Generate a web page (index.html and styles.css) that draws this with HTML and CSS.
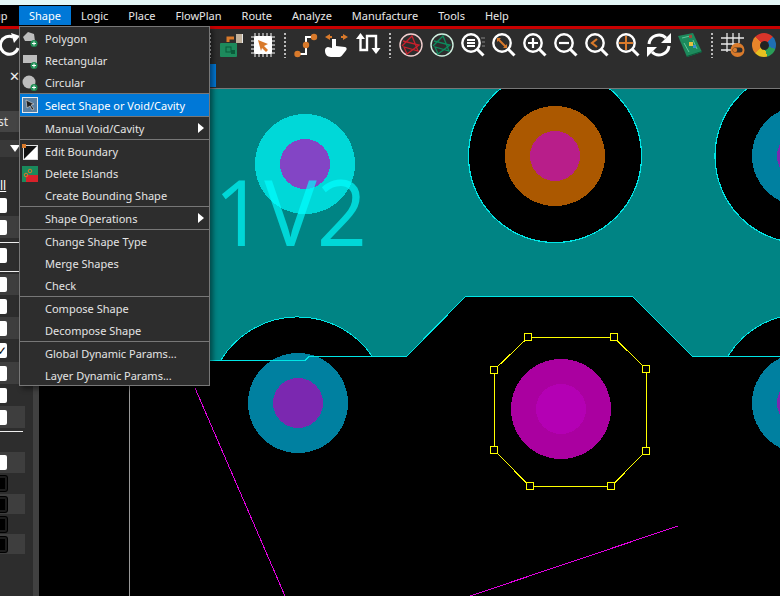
FILE: index.html
```html
<!DOCTYPE html>
<html lang="en">
<head>
<meta charset="utf-8">
<title>Shape menu</title>
<link rel="stylesheet" href="styles.css">
</head>
<body>
<div class="app">
  <div class="titlestrip"></div>
  <nav class="menubar">
    <span class="mi mi-first">up</span>
    <span class="mi mi-active">Shape</span>
    <span class="mi">Logic</span>
    <span class="mi">Place</span>
    <span class="mi">FlowPlan</span>
    <span class="mi">Route</span>
    <span class="mi">Analyze</span>
    <span class="mi">Manufacture</span>
    <span class="mi">Tools</span>
    <span class="mi">Help</span>
  </nav>
  <div class="redline"></div>
  <div class="toolbar">
    <svg class="ico ico-first" viewBox="0 0 24 24"><path d="M20 15A9 9 0 1 1 15 4" fill="none" stroke="#fff" stroke-width="3"/><path d="M13 0l9 3-6 7z" fill="#fff"/></svg>
    <span class="tool-spacer"></span>
    <span class="sep-dots sep-first"></span>
    <svg class="ico" viewBox="0 0 24 24"><rect x="0" y="10" width="17" height="14" rx="1" fill="#1d8a5c"/><rect x="6" y="14" width="5" height="5" fill="none" stroke="#0b5a3a"/><rect x="11" y="17" width="4" height="4" fill="#0b5a3a"/><path d="M8 9V5h6" fill="none" stroke="#d97a2b" stroke-width="3"/><rect x="16" y="1" width="7" height="9" fill="#e8e8e8"/><path d="M17 1v9M19 1v9M21 1v9" stroke="#9a7a50"/></svg>
    <svg class="ico" viewBox="0 0 24 24"><path d="M4 0v24M8 0v24M12 0v24M16 0v24M20 0v24M0 4h24M0 8h24M0 12h24M0 16h24M0 20h24" stroke="#fff" stroke-width="1"/><rect x="3" y="3" width="18" height="18" rx="2" fill="#fff"/><path d="M7 7l10 4-4 2 4 4-2 2-4-4-1 3z" fill="#d97a2b"/></svg>
    <span class="sep-dots"></span>
    <svg class="ico" viewBox="0 0 24 24"><path d="M3 21h9V4h8" fill="none" stroke="#fff" stroke-width="2"/><circle cx="3.500" cy="21" r="3.200" fill="#d97a2b"/><circle cx="12" cy="12" r="3.200" fill="#d97a2b"/><circle cx="20" cy="4" r="3.200" fill="#d97a2b"/></svg>
    <svg class="ico" viewBox="0 0 24 24"><path d="M0 4l5-3v2h2v2H5v2zM23 4l-5-3v2h-2v2h2v2z" fill="#d97a2b"/><path d="M7 6h4v7l9 1c2 .3 2 2.500 1 3.500l-4 5c-1 1-2 1.500-4 1.500H6c-4 0-6-3-6-6v-1c0-2 2-3 3-3l4 1z" fill="#fff"/></svg>
    <svg class="ico" viewBox="0 0 24 24"><path d="M4.500 4V17H11V3H20V16" fill="none" stroke="#fff" stroke-width="2.400"/><path d="M0 6L4.500 0 9 6zM15.500 15L20 21 24.500 15z" fill="#fff"/></svg>
    <span class="sep-dots"></span>
    <svg class="ico" viewBox="0 0 24 24"><circle cx="12" cy="12" r="11" fill="#2d2d2d" stroke="#f3d0d0" stroke-width="1.400"/><path d="M3 13L13 3l6 15L5 14l3 7 12-9-16-4" fill="none" stroke="#c8202c" stroke-width="1.300"/></svg>
    <svg class="ico" viewBox="0 0 24 24"><circle cx="12" cy="12" r="11" fill="#2d2d2d" stroke="#d0f0e0" stroke-width="1.400"/><path d="M3 13L13 3l6 15L5 14l3 7 12-9-16-4" fill="none" stroke="#0e8a5c" stroke-width="1.300"/></svg>
    <svg class="ico" viewBox="0 0 24 24"><circle cx="10" cy="10" r="8.700" fill="none" stroke="#fff" stroke-width="2.400"/><path d="M6 7h8M6 10h8M6 13h8" stroke="#fff" stroke-width="1.800"/><path d="M20 5h4M21 9h3M21 13h3" stroke="#888"/><path d="M16.500 16.500l6 6" stroke="#fff" stroke-width="3"/></svg>
    <svg class="ico" viewBox="0 0 24 24"><circle cx="10" cy="10" r="8.700" fill="none" stroke="#fff" stroke-width="2.400"/><path d="M6 6l8 8" stroke="#d97a2b" stroke-width="2"/><path d="M5 5h4L5 9zM15 15h-4l4-4z" fill="#d97a2b"/><path d="M16.500 16.500l6 6" stroke="#fff" stroke-width="3"/></svg>
    <svg class="ico" viewBox="0 0 24 24"><circle cx="10" cy="10" r="8.700" fill="none" stroke="#fff" stroke-width="2.400"/><path d="M5 10h10M10 5v10" stroke="#fff" stroke-width="2.200"/><path d="M16.500 16.500l6 6" stroke="#fff" stroke-width="3"/></svg>
    <svg class="ico" viewBox="0 0 24 24"><circle cx="10" cy="10" r="8.700" fill="none" stroke="#fff" stroke-width="2.400"/><path d="M5 10h10" stroke="#fff" stroke-width="2.200"/><path d="M16.500 16.500l6 6" stroke="#fff" stroke-width="3"/></svg>
    <svg class="ico" viewBox="0 0 24 24"><circle cx="10" cy="10" r="8.700" fill="none" stroke="#fff" stroke-width="2.400"/><path d="M12 6l-5 4 5 4" fill="none" stroke="#d97a2b" stroke-width="2.200"/><path d="M16.500 16.500l6 6" stroke="#fff" stroke-width="3"/></svg>
    <svg class="ico" viewBox="0 0 24 24"><circle cx="10" cy="10" r="8.700" fill="none" stroke="#fff" stroke-width="2.400"/><path d="M3 10h14M10 3v14" stroke="#d97a2b" stroke-width="2"/><path d="M16.500 16.500l6 6" stroke="#fff" stroke-width="3"/></svg>
    <svg class="ico" viewBox="0 0 24 24"><path d="M2 11A10 10 0 0 1 19 5" fill="none" stroke="#fff" stroke-width="3"/><path d="M24 0v10H14z" fill="#fff"/><path d="M22 13A10 10 0 0 1 5 19" fill="none" stroke="#fff" stroke-width="3"/><path d="M0 24V14h10z" fill="#fff"/></svg>
    <svg class="ico" viewBox="0 0 24 24"><path d="M0 3l15-3 9 19-15 5z" fill="#1d8a5c"/><path d="M9 24l15-5v-1L8.500 23z" fill="#0b5a3a"/><path d="M4 5l8-2M6 10l5 9M15 7l4 9" stroke="#5ec79a" stroke-width="1"/><rect x="11" y="9" width="4" height="4" fill="#e6c040"/><rect x="15" y="12" width="3" height="3" fill="#3a90d0"/><rect x="11" y="2" width="3" height="3" fill="#a04a3a"/></svg>
    <span class="sep-dots"></span>
    <svg class="ico" viewBox="0 0 24 24"><path d="M6 0v19M12 0v14M18 0v10M0 5h23M0 11h18M0 17h11" stroke="#e8e8e8" stroke-width="1.300"/><circle cx="16.500" cy="17" r="7" fill="#d97a2b"/><rect x="11.500" y="14.500" width="10" height="5" rx="2.500" fill="#2d2d2d"/><circle cx="14" cy="17" r="2.200" fill="#d97a2b"/></svg>
    <span class="wheel"><span class="wheel-hub"></span></span>
  </div>
  <div class="tabrow">
    <span class="tab-close">✕</span>
    <span class="tab-active"></span>
  </div>
  <div class="main">
    <aside class="side">
      <div class="side-inner">
        <div class="side-btn">st</div>
        <div class="side-drop"><span class="tri"></span></div>
        <div class="side-all">ll</div>
        <div class="row r21"><span class="cb"></span></div>
        <div class="row band"><span class="cb"></span></div>
        <div class="rule rule-a"></div>
        <div class="row r21"><span class="cb"></span></div>
        <div class="rule rule-b"></div>
        <div class="row r21 band"><span class="cb"></span></div>
        <div class="row"><span class="cb"></span></div>
        <div class="row band"><span class="cb"></span></div>
        <div class="row r23"><span class="cb cb-on">✓</span></div>
        <div class="row band"><span class="cb"></span></div>
        <div class="row"><span class="cb"></span></div>
        <div class="row band"><span class="cb"></span></div>
        <div class="rule rule-c"></div>
        <div class="row r21 band"><span class="cb"></span></div>
        <div class="row r21"><span class="cb cb-off"></span></div>
        <div class="row r20 band"><span class="cb cb-off"></span></div>
        <div class="row r20"><span class="cb cb-off"></span></div>
        <div class="row r20 band"><span class="cb cb-off"></span></div>
      </div>
      <div class="side-strip"></div>
    </aside>
    <div class="canvas">
      <svg class="board" viewBox="39 89 741 507">
        <path d="M39 88H780V317A90 90 0 0 0 728 356H692L632 296H466L407 356H372A90 90 0 0 0 221 360H39Z" fill="#008484" stroke="#00e6e6"/>
        <circle cx="555" cy="156" r="86.500" fill="#000" stroke="#00e6e6" stroke-width="1.200"/>
        <circle cx="802" cy="156" r="87" fill="#000" stroke="#00e6e6" stroke-width="1.200"/>
        <circle cx="555" cy="156" r="50" fill="#ab5800"/>
        <circle cx="555" cy="156" r="25" fill="#b81e8a"/>
        <circle cx="802" cy="156" r="50" fill="#0080a0"/>
        <circle cx="802" cy="156" r="25" fill="#7b28b0"/>
        <circle cx="305" cy="164" r="50" fill="#00d8d8"/>
        <circle cx="305" cy="164" r="25" fill="#8345c5"/>
        <text class="netlabel" x="214" y="246" textLength="153" lengthAdjust="spacingAndGlyphs">1V2</text>
        <circle cx="298" cy="403" r="50" fill="#0080a0"/>
        <circle cx="298" cy="403" r="25" fill="#7b28b0"/>
        <circle cx="802" cy="403" r="50" fill="#0080a0"/>
        <circle cx="802" cy="403" r="25" fill="#7b28b0"/>
        <circle cx="561" cy="409" r="50" fill="#aa00a0"/>
        <circle cx="561" cy="409" r="25" fill="#b400b4"/>
        <path d="M205 360.500H305L309 356.500H372M728 356.500H780" fill="none" stroke="#00e6e6"/>
        <path d="M129.500 360V596" stroke="#999"/>
        <path d="M195 388L285 596M470 596L678 526" fill="none" stroke="#e000e0"/>
        <path class="outline" d="M528 337.500H614L646 369V451L611 486.500H530L494 450V370Z"/>
        <g class="handles">
          <rect x="524.500" y="333.500" width="7" height="7"/>
          <rect x="610.500" y="333.500" width="7" height="7"/>
          <rect x="642.500" y="365.500" width="7" height="7"/>
          <rect x="642.500" y="447.500" width="7" height="7"/>
          <rect x="607.500" y="482.500" width="7" height="7"/>
          <rect x="526.500" y="482.500" width="7" height="7"/>
          <rect x="490.500" y="446.500" width="7" height="7"/>
          <rect x="490.500" y="366.500" width="7" height="7"/>
        </g>
      </svg>
    </div>
  </div>
</div>
<div class="menu">
  <div class="item"><svg class="mico" viewBox="0 0 16 16"><path d="M1 6l5-5 6 2 1 7H3z" fill="#bdbdbd"/><circle cx="12" cy="12.500" r="3.500" fill="#1f8f55"/><path d="M10 12.500h4M12 10.500v4" stroke="#fff"/></svg>Polygon</div>
  <div class="item"><svg class="mico" viewBox="0 0 16 16"><rect x="1" y="2" width="14" height="8" fill="#bdbdbd"/><circle cx="12" cy="12.500" r="3.500" fill="#1f8f55"/><path d="M10 12.500h4M12 10.500v4" stroke="#fff"/></svg>Rectangular</div>
  <div class="item"><svg class="mico" viewBox="0 0 16 16"><circle cx="7" cy="7" r="6.500" fill="#bdbdbd"/><circle cx="12" cy="12.500" r="3.500" fill="#1f8f55"/><path d="M10 12.500h4M12 10.500v4" stroke="#fff"/></svg>Circular</div>
  <div class="sep sep-overlap"></div>
  <div class="item item-low item-active"><svg class="mico" viewBox="0 0 16 16"><rect x=".5" y=".5" width="15" height="15" fill="#5a7fa0" stroke="#e8e8e8"/><path d="M4 3l8 4-3 1 3 4-2 1-2-4-3 2z" fill="#222" stroke="#ddd" stroke-width=".6"/></svg>Select Shape or Void/Cavity</div>
  <div class="sep"></div>
  <div class="item item-low">Manual Void/Cavity<span class="arrow"></span></div>
  <div class="sep sep-gap"></div>
  <div class="item"><svg class="mico" viewBox="0 0 16 16"><rect x="1.500" y="1.500" width="14" height="14" fill="#111" stroke="#ddd"/><path d="M15 2v13H2z" fill="#fff"/><rect x="0" y="0" width="4" height="4" fill="#d97a2b"/></svg>Edit Boundary</div>
  <div class="item"><svg class="mico" viewBox="0 0 16 16"><rect width="16" height="16" fill="#1a8a5c"/><path d="M4 9h12v7H4z" fill="#d8222a"/><circle cx="4" cy="9" r="1.800" fill="none" stroke="#d97a2b"/><circle cx="8" cy="5" r="1.800" fill="none" stroke="#d97a2b"/></svg>Delete Islands</div>
  <div class="item">Create Bounding Shape</div>
  <div class="sep sep-overlap"></div>
  <div class="item item-low">Shape Operations<span class="arrow"></span></div>
  <div class="sep sep-gap"></div>
  <div class="item">Change Shape Type</div>
  <div class="item">Merge Shapes</div>
  <div class="item">Check</div>
  <div class="sep sep-overlap sep-gap"></div>
  <div class="item">Compose Shape</div>
  <div class="item">Decompose Shape</div>
  <div class="sep sep-overlap sep-gap"></div>
  <div class="item">Global Dynamic Params...</div>
  <div class="item item-last">Layer Dynamic Params...</div>
</div>
</body>
</html>
```
FILE: styles.css
```css
* { box-sizing: border-box; }
html, body { margin: 0; padding: 0; height: 100%; overflow: hidden; background: #2d2d2d; }
body { font-family: "Noto Sans", "Liberation Sans", sans-serif; font-size: 11px; color: #e4e4e4; }
.app { width: 780px; height: 596px; display: flex; flex-direction: column; overflow: hidden; }
.titlestrip { height: 5px; background: #e4f7f7; flex: none; }
.menubar { height: 21px; background: #000; display: flex; align-items: center; flex: none; }
.mi { padding: 0 10px 1px; height: 19px; display: flex; align-items: center; color: #e8e8e8; }
.mi-first { padding: 0 0 1px; margin-left: -6px; width: 25px; }
.mi-active { background: #0078d7; color: #fff; }
.redline { height: 3px; background: #c80000; flex: none; }
.toolbar { height: 35px; background: #2d2d2d; display: flex; align-items: flex-start; gap: 7px; padding-top: 4px; flex: none; }
.ico { width: 24px; height: 24px; flex: none; overflow: visible; }
.ico-first { margin-left: -2px; }
.tool-spacer { width: 172px; flex: none; }
.sep-dots { width: 5px; height: 25px; flex: none; background: repeating-linear-gradient(to bottom, #bbb 0 2px, transparent 2px 4px) center / 2px 100% no-repeat; }
.sep-first { margin-left: -1px; margin-right: 1px; }
.wheel { width: 24px; height: 24px; flex: none; border-radius: 50%; position: relative; display: flex; align-items: center; justify-content: center; background: conic-gradient(#d8352a 0 45deg, #1f6fb5 45deg 110deg, #2a9d58 110deg 165deg, #e6c020 165deg 225deg, #e8852a 225deg 315deg, #d8352a 315deg); }
.wheel-hub { width: 9px; height: 9px; border-radius: 50%; background: #222; }
.tabrow { height: 24px; background: #2d2d2d; display: flex; align-items: flex-start; flex: none; }
.tab-close { width: 200px; padding-left: 9px; font-size: 13px; line-height: 24px; color: #eee; }
.tab-active { width: 16px; height: 23px; background: #0078d7; }
.main { flex: 1; display: flex; min-height: 0; }
.side { width: 39px; flex: none; display: flex; background: #2d2d2d; }
.side-inner { width: 33px; display: flex; flex-direction: column; overflow: hidden; }
.side-strip { width: 6px; background: #414141; }
.side-btn { height: 21px; width: 33px; margin-top: 23px; background: #444; line-height: 21px; font-size: 12px; text-indent: -2px; }
.side-drop { height: 17px; width: 33px; margin-top: 8px; background: #393939; display: flex; justify-content: flex-end; align-items: center; padding-right: 13px; }
.tri { width: 0; height: 0; border-left: 5px solid transparent; border-right: 5px solid transparent; border-top: 7px solid #fff; }
.side-all { height: 38px; line-height: 16px; padding-top: 21px; text-decoration: underline; font-size: 12px; color: #fff; flex: none; }
.row { height: 22px; width: 25px; display: flex; align-items: center; flex: none; }
.r21 { height: 21px; }
.r20 { height: 20px; }
.r23 { height: 23px; }
.band { background: #3e3e3e; }
.cb { width: 15px; height: 15px; margin-left: -8px; background: #fff; border-radius: 2px; flex: none; display: flex; align-items: center; justify-content: flex-end; color: #000; font-size: 12px; line-height: 15px; overflow: hidden; }
.cb-off { background: #000; border: 2px solid #1c1c1c; box-shadow: 0 0 0 1px #000; }
.rule { height: 1px; width: 23px; background: #eee; flex: none; }
.rule-a { margin-top: 4px; margin-bottom: 2px; }
.rule-b { margin-top: 5px; margin-bottom: 2px; }
.rule-c { margin-top: 3px; margin-bottom: 20px; }
.canvas { flex: 1; min-width: 0; background: #000; border-top: 1px solid #777; overflow: hidden; }
.board { display: block; width: 741px; height: 507px; shape-rendering: crispEdges; }
.netlabel { font-family: "Open Sans", "Noto Sans", sans-serif; font-weight: 400; font-size: 92px; fill: #00ffff; fill-opacity: .68; shape-rendering: auto; }
.outline { fill: none; stroke: #ffff00; stroke-width: 1; }
.handles rect { fill: #000; stroke: #ffff00; stroke-width: 1; }
.menu { position: absolute; left: 19px; top: 26px; width: 191px; height: 360px; background: #2d2d2d; border: 1px solid #777; padding-top: 1px; box-shadow: 3px 3px 5px rgba(0,0,0,.45); overflow: hidden; }
.item { height: 22px; padding: 0 0 2px 25px; display: flex; align-items: center; position: relative; color: #e4e4e4; white-space: nowrap; }
.item-low { padding-bottom: 0; }
.item-active { background: #0078d7; color: #fff; }
.item-last { height: 21px; padding-bottom: 0; }
.mico { position: absolute; left: 2px; top: 3px; width: 16px; height: 16px; }
.sep { height: 1px; background: #777; }
.sep-overlap { margin-top: -1px; }
.sep-gap { margin-bottom: 1px; }
.arrow { position: absolute; right: 5px; top: 6px; width: 0; height: 0; border-top: 5px solid transparent; border-bottom: 5px solid transparent; border-left: 6px solid #fff; }
```
